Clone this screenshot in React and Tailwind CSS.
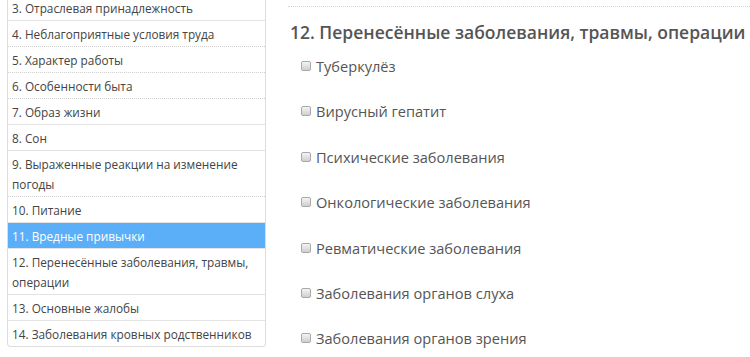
import React from 'react';

const menu = [
  { n: '3. Отраслевая принадлежность', sep: 'solid' },
  { n: '4. Неблагоприятные условия труда', sep: 'dotted' },
  { n: '5. Характер работы', sep: 'dotted' },
  { n: '6. Особенности быта', sep: 'dotted' },
  { n: '7. Образ жизни', sep: 'solid' },
  { n: '8. Сон', sep: 'solid' },
  { n: '9. Выраженные реакции на изменение погоды', sep: 'dotted' },
  { n: '10. Питание', sep: 'solid' },
  { n: '11. Вредные привычки', sep: 'solid', active: true },
  { n: '12. Перенесённые заболевания, травмы, операции', sep: 'solid' },
  { n: '13. Основные жалобы', sep: 'solid' },
  { n: '14. Заболевания кровных родственников', sep: 'none' }
];

const diseases = [
  'Туберкулёз',
  'Вирусный гепатит',
  'Психические заболевания',
  'Онкологические заболевания',
  'Ревматические заболевания',
  'Заболевания органов слуха',
  'Заболевания органов зрения'
];

function Checkbox() {
  return <span className="inline-block w-[10px] h-[10px] rounded-[2px] border border-[#a9a9a9] bg-gradient-to-b from-[#f4f4f4] to-[#cfcfcf] shrink-0" />;
}

export default function App() {
  return <div className="w-[750px] h-[357px] overflow-hidden bg-white flex text-[#555] font-['Open_Sans',sans-serif]">
      <div className="pl-[7px] w-[266px] shrink-0">
        <div className="mt-[-5px] border-x border-b border-[#ddd] rounded-b-[4px] bg-white">
          {menu.map((m, i) => <div key={i} className={
            (m.active ? 'bg-[#5aaff8] text-white ' : 'text-[#444] ') +
            (m.sep === 'solid' ? 'border-b border-solid border-[#e3e3e3] ' : m.sep === 'dotted' ? 'border-b border-dotted border-[#d0d0d0] ' : '') +
            'pl-[4px] pr-[6px] pt-[3px] pb-[2px] text-[11.8px] leading-[20px]'
          }>
              {m.n}
            </div>)}
        </div>
      </div>
      <div className="flex-1 pl-[22px]">
        <div className="mt-[6px] border-t border-dotted border-[#d5d5d5]" />
        <h2 className="mt-[13px] pl-[2px] text-[17.5px] font-semibold leading-[24px] text-[#555] whitespace-nowrap">
          12. Перенесённые заболевания, травмы, операции
        </h2>
        <div className="mt-[12px] pl-[13px] flex flex-col gap-[25.4px]">
          {diseases.map(d => <label key={d} className="flex items-center gap-[5px] text-[14.6px] leading-[20px] text-[#555]">
              <Checkbox />
              <span>{d}</span>
            </label>)}
        </div>
      </div>
    </div>;
}
